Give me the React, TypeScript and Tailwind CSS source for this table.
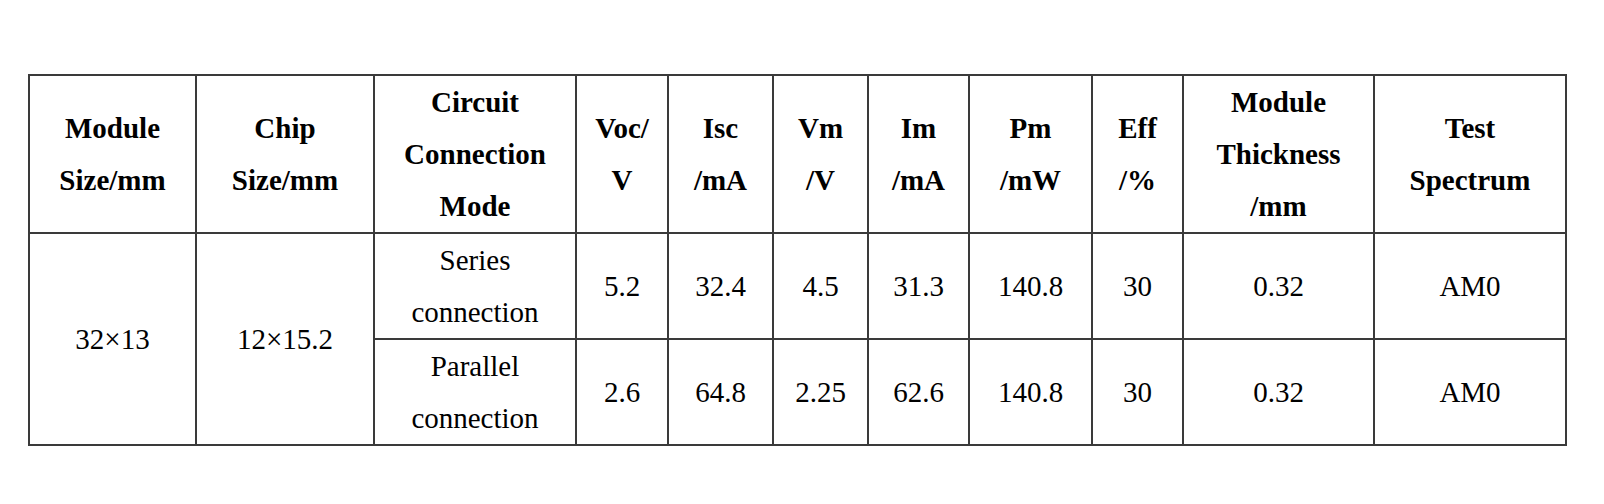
const widths = [167, 178, 202, 92, 105, 95, 101, 123, 91, 191, 192];

const headers: string[][] = [
  ["Module", "Size/mm"],
  ["Chip", "Size/mm"],
  ["Circuit", "Connection", "Mode"],
  ["Voc/", "V"],
  ["Isc", "/mA"],
  ["Vm", "/V"],
  ["Im", "/mA"],
  ["Pm", "/mW"],
  ["Eff", "/%"],
  ["Module", "Thickness", "/mm"],
  ["Test", "Spectrum"],
];

const rows = [
  { mode: ["Series", "connection"], vals: ["5.2", "32.4", "4.5", "31.3", "140.8", "30", "0.32", "AM0"] },
  { mode: ["Parallel", "connection"], vals: ["2.6", "64.8", "2.25", "62.6", "140.8", "30", "0.32", "AM0"] },
];

const cell = "border-2 border-[#3a3a3a] p-0 text-center align-middle";

function Lines({ lines }: { lines: string[] }) {
  return (
    <>
      {lines.map((l, i) => (
        <div key={i}>{l}</div>
      ))}
    </>
  );
}

export default function App() {
  return (
    <div className="w-[1604px] h-[504px] bg-white pl-[28px] pt-[74px] font-['Liberation_Serif'] text-[29px] leading-[52px] text-black">
      <table className="w-[1539px] table-fixed border-collapse">
        <colgroup>
          {widths.map((w, i) => (
            <col key={i} style={{ width: w }} />
          ))}
        </colgroup>
        <thead>
          <tr className="h-[157px]">
            {headers.map((h, i) => (
              <th key={i} className={`${cell} font-bold`}>
                <Lines lines={h} />
              </th>
            ))}
          </tr>
        </thead>
        <tbody>
          {rows.map((r, ri) => (
            <tr key={ri} className={ri === 0 ? "h-[106px]" : "h-[105px]"}>
              {ri === 0 && (
                <>
                  <td rowSpan={2} className={cell}>32×13</td>
                  <td rowSpan={2} className={cell}>12×15.2</td>
                </>
              )}
              <td className={cell}>
                <Lines lines={r.mode} />
              </td>
              {r.vals.map((v, i) => (
                <td key={i} className={cell}>
                  {v}
                </td>
              ))}
            </tr>
          ))}
        </tbody>
      </table>
    </div>
  );
}
